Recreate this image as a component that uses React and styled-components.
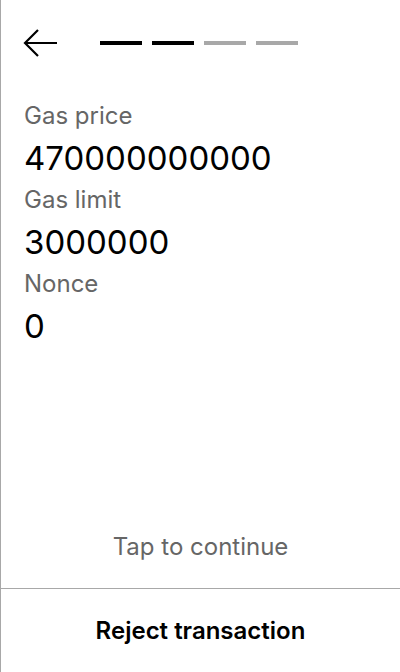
import React from "react";
import styled, { createGlobalStyle } from "styled-components";

const GlobalStyle = createGlobalStyle`
  html, body {
    margin: 0;
    padding: 0;
    background: #fff;
  }
  body {
    font-family: Inter, "Noto Sans", sans-serif;
  }
`;

const Screen = styled.div`
  box-sizing: border-box;
  width: 400px;
  height: 672px;
  display: flex;
  flex-direction: column;
  border-left: 1px solid #a8a8a8;
  background: #fff;
`;

const Header = styled.div`
  display: flex;
  align-items: center;
  height: 86px;
  padding-left: 21px;
`;

const BackButton = styled.button`
  display: flex;
  align-items: center;
  justify-content: center;
  padding: 0;
  margin: 0;
  border: 0;
  background: none;
  cursor: pointer;
  color: #000;
`;

const Steps = styled.div`
  display: flex;
  gap: 10px;
  margin-left: 42px;
`;

const Step = styled.div`
  width: 42px;
  height: 4px;
  background: ${(p) => (p.$done ? "#000" : "#a8a8a8")};
`;

const Details = styled.div`
  flex: 1;
  display: flex;
  flex-direction: column;
  padding: 12px 23px 0;
`;

const Label = styled.div`
  font-size: 24px;
  line-height: 36px;
  color: #666;
`;

const Value = styled.div`
  font-size: 33px;
  line-height: 48px;
  color: #000;
`;

const Hint = styled.div`
  margin-top: auto;
  padding-bottom: 26px;
  text-align: center;
  font-size: 24px;
  line-height: 30px;
  color: #666;
`;

const Footer = styled.button`
  height: 84px;
  border: 0;
  border-top: 1px solid #a8a8a8;
  background: #fff;
  font-family: inherit;
  font-size: 24px;
  font-weight: 600;
  color: #000;
  cursor: pointer;
`;

const fields = [
  { label: "Gas price", value: "470000000000" },
  { label: "Gas limit", value: "3000000" },
  { label: "Nonce", value: "0" },
];

const steps = [true, true, false, false];

function ArrowLeft() {
  return (
    <svg width="36" height="30" viewBox="0 0 36 30" fill="none">
      <path
        d="M16 2 L3 15 L16 28 M3 15 H35"
        stroke="currentColor"
        strokeWidth="2.2"
        strokeLinecap="butt"
        strokeLinejoin="miter"
      />
    </svg>
  );
}

export default function App() {
  return (
    <>
      <GlobalStyle />
      <Screen>
        <Header>
          <BackButton type="button" aria-label="Back">
            <ArrowLeft />
          </BackButton>
          <Steps>
            {steps.map((done, i) => (
              <Step key={i} $done={done} />
            ))}
          </Steps>
        </Header>
        <Details>
          {fields.map((f) => (
            <React.Fragment key={f.label}>
              <Label>{f.label}</Label>
              <Value>{f.value}</Value>
            </React.Fragment>
          ))}
          <Hint>Tap to continue</Hint>
        </Details>
        <Footer type="button">Reject transaction</Footer>
      </Screen>
    </>
  );
}
